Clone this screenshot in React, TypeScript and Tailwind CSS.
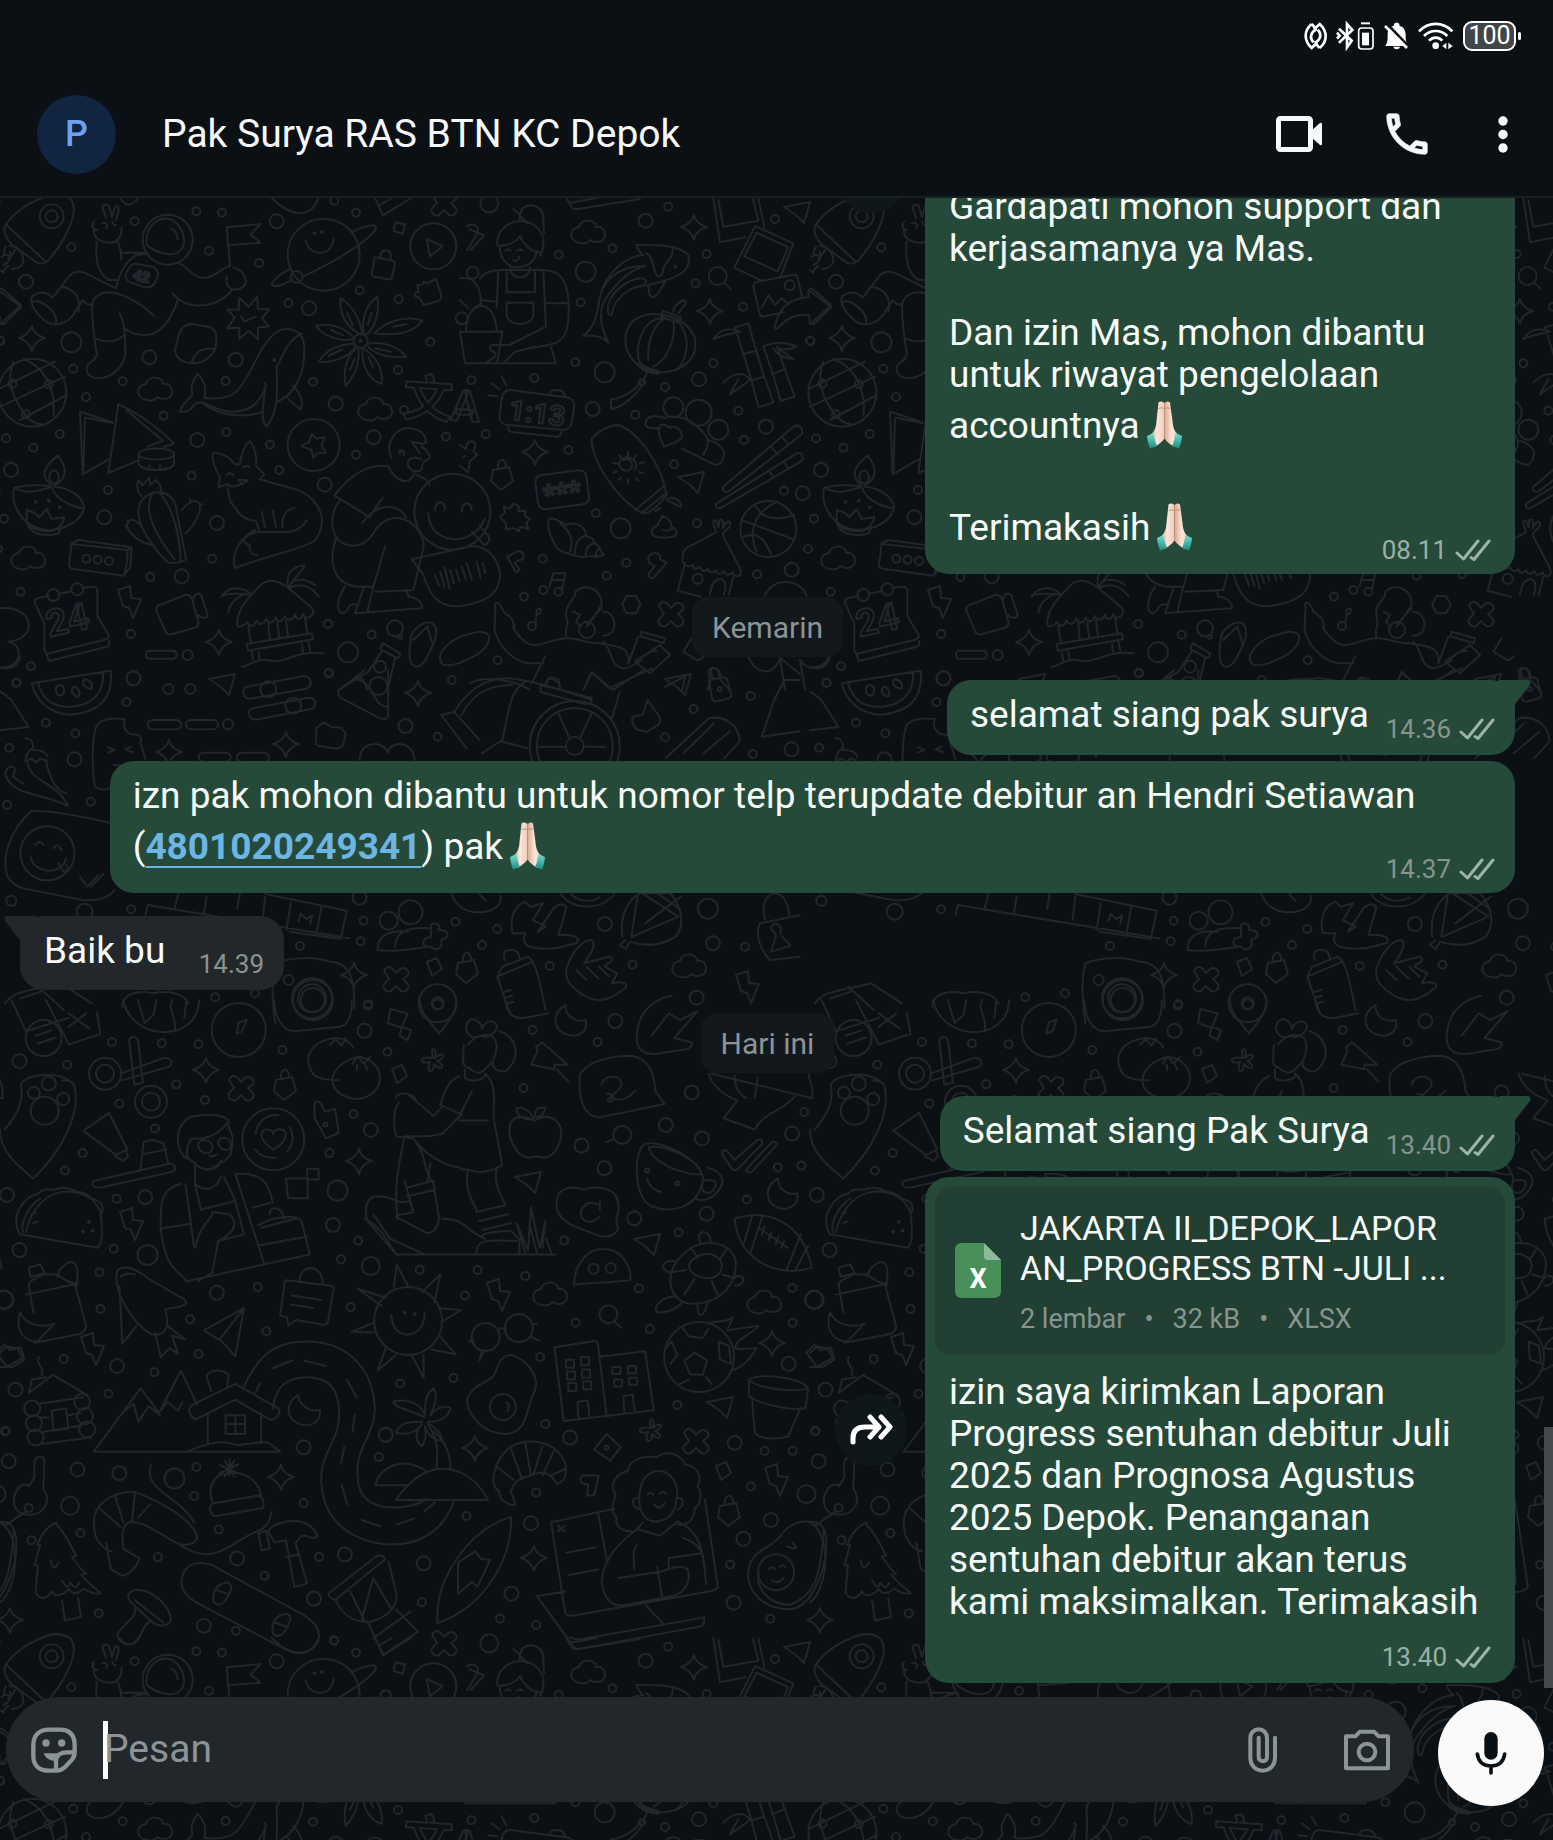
import { useState } from 'react';
import type { ReactNode } from 'react';

type Sheet = {
    x: number; y: number; sx: number; sy: number;
    rings: number[][];
    paths: string[];
    texts?: Array<{ x: number; y: number; size: number; rotate: number; value: string }>;
};

// wallpaper doodles, one tile is 810 x 1440 and repeats over the whole page
const TILE_W = 810;
const TILE_H = 1440;

const sheets: Sheet[] = [
    {
        x: 0, y: 190, sx: 1 / 3, sy: 1 / 3,
        rings: [
            [155, 79, 12], [155, 79, 6], [214, 172, 4], [404, 94, 4], [589, 64, 4], [666, 68, 4], [627, 182, 4], [777, 219, 4], [830, 94, 7], [1003, 32, 4], [1068, 68, 4],
            [78, 275, 7], [214, 457, 10], [220, 536, 4], [258, 621, 4], [368, 574, 4], [448, 502, 7], [491, 677, 4], [179, 732, 4], [18, 745, 4], [100, 773, 4], [33, 840, 7],
            [865, 339, 4], [927, 355, 7], [707, 509, 7], [677, 573, 4], [939, 575, 4], [1007, 641, 7], [1079, 301, 4], [1196, 328, 4], [1291, 455, 4], [1194, 540, 4], [1212, 660, 4],
            [679, 726, 4], [592, 750, 7], [810, 764, 4], [838, 840, 4], [575, 857, 4], [324, 900, 4], [313, 982, 7], [12, 986, 4], [651, 999, 7], [974, 884, 7], [1068, 794, 4], [1121, 742, 7], [1338, 740, 4],
            [637, 1106, 4], [451, 1161, 4], [545, 1159, 7], [62, 1205, 4], [393, 1332, 4], [563, 1395, 5], [984, 1302, 4], [1044, 1387, 10], [1115, 1334, 4], [1185, 1315, 8], [93, 1429, 4], [50, 1478, 4], [400, 1465, 7], [986, 1448, 4], [0, 452, 4],
            [503, 149, 25], [971, 194, 36], [890, 261, 6], [944, 130, 1], [965, 126, 1], [1300, 169, 23], [1082, 453, 7], [1082, 453, 1], [97, 608, 34], [37, 581, 4], [146, 583, 4], [78, 673, 4], [823, 510, 1],
            [107, 936, 1], [146, 932, 1], [179, 952, 1], [941, 765, 26], [1357, 965, 38], [259, 1106, 4], [293, 1109, 4], [327, 1113, 4], [160, 1215, 6], [232, 1198, 6], [1140, 1430, 6], [1200, 1340, 2],
        ],
        paths: [
            'M125 24C70 45 30 80 14 110c-4 20 5 35 20 52l75 55c15 8 25 4 38-8 30-35 65-90 74-140 2-20-2-35-12-45C180 5 150 12 125 24M22 107l112 105',
            'M18 170q-10 15-5 25M28 168c25 0 40 20 42 40s-20 30-35 28M5 200q15-10 25 0M10 225c15-5 25-20 20-40M0 240l10 8q0-12 15-20M45 180q-10 20-20 25',
            'M0 295l8 3 52 45c4 4 4 8 0 12L15 400q-6 4-15 0',
            'M283 95c-10 10-5 25 8 25M306 100c12-5 20 5 12 15M318 85l-10-32c0-12 18-12 20 0l8 28 8-28c5-10 14-4 12 8l-8 30M338 95q2 14 10 10M283 120c-5 20 15 38 45 38 25 0 40-20 36-45M290 155c-5 60 5 95 35 115h30M350 150q14 25 14 58M365 188h75M348 295c10-50 35-90 65-100l30-5M348 295l-90-45c-20-8-40-5-50 8l-50 65c-20-20-40-20-60-5-15 20 15 60 45 80 20 10 50 5 70-15l35-52 10 10 20 5M100 335c20-10 75 30 68 65M185 290c35 5 60 30 50 75',
            'M440 165c-5-45 20-75 55-80 35 0 60 40 57 75-5 25-25 35-50 32-20-2-50-15-62-27M513 115q20 10 20 32',
            'M415 222l40 8c15 5 22 15 17 32l-8 18c-8 12-20 14-35 10l-35-12c-15-6-20-15-16-28l10-18c5-10 14-13 27-10z',
            'M535 220c25 5 40 40 70 44 35 3 60-30 85-38M700 232c20 5 35 20 37 38s-15 30-35 28-25-20-22-40M518 310c40 50 130 50 180-12M535 325c-20 60-50 110-100 110-25 0-45-8-60-18M358 368c18 35 18 70 18 130-10 35-40 65-80 67-45-3-45-38-15-55l10-15c-10-60-15-120-15-150 5-30 30-38 55-38 45 5 95 35 132 72M285 445c25 12 65 15 90-12',
            'M690 230l-10-118 102-10-30 32 30 24-98 8',
            'M1058 125c30-15 65-25 70-15 0 25-100 95-220 150M872 235c-30 15-60 40-56 52 20 5 40-8 62-18M917 150c5 50 80 55 84-5',
            'M815 24c60 60 120 60 140 0M360 24q25 40 55 0M1125 24l24 52 84-52M1135 48l40-24',
            'M1187 97l28 6-6 28-28-8zM1280 147l48 22-38 30z',
            'M1127 202l50 10c6 2 8 6 7 12l-8 38c-2 6-6 7-12 6l-40-8c-8-2-10-6-8-12l6-38q1-8 5-8zM1142 205v-10c2-18 30-18 30 0v15',
            'M1270 345l-10-20-16-8q0-14 12-10l-4-22 16-2q2-14 12-2l28-14 16 50c2 10-6 18-16 18z',
            'M718 323l28 27 26-30 2 38 34 0-22 26 20 25-32 4 0 34-28-24-28 24 0-34-36 2 22-32-22-24 34 0zM722 378l12 16 34-14',
            'M575 402l50 8c20 5 26 20 24 38l-3 30c-20 35-45 42-70 42-30-2-55-20-50-45l12-45c6-18 18-27 37-28zM575 518c10-30 25-45 68-42',
            'M540 665c5-25 35-45 38-52-10-30 5-45 15-62 10 15 30 30 20 72 20 5 50 2 75-5 70-30 90-200 175-202 40 5 50 30 50 65 0 70-25 130-82 155M540 665c25 2 30-5 40-18 25-30 60 20 120 18 40 0 80-20 98-80l-5-6M605 638c60 45 130 45 182 28M905 430c-40 20-50 55-75 100 0 60 10 130-30 180-20-20-10-60-5-110M878 588c25 20 32 50 25 70-15-10-30-20-45-40',
            'M1078 432c-50-30-60-70-56-108 30 20 60 60 64 106M1092 432c-10-50 10-90 40-112 8 50-10 100-34 114M1062 447c-40 10-95-10-114-40 50-10 90 10 114 36M1068 468c-20 35-70 50-112 48 20-35 60-55 108-55M1075 474c5 50-15 90-38 114-10-50 5-90 30-112M1090 474c40 30 60 60 55 108-35-10-60-50-58-104M1102 462c50-10 95 10 116 38-45 5-90-5-114-30M1125 428c30-30 90-55 142-36-30 40-90 45-142 38M1042 370l16 36M1115 368l-12 36M992 420l38 16M985 498l42-20M1050 540l14-34M1105 500l14 32M1180 410l40-8M1125 475l48 10',
            'M40 515c-20 50-10 100 35 158 12 15 20 25 50 30M70 507c60 20 100 90 90 170M0 650l195-90M0 595l165-80M60 690l140-75',
            'M240 665c35 10 60 20 98 32M240 665l8 188 78-45M255 683l-5 160M258 683l80 16M355 643l-30 206 90-38M355 643c50 20 120 70 167 118l-30 10M380 660c50 45 70 60 110 92l-48 18M416 792c0-22 106-22 106 0s-106 22-106 0zM416 792v30c10 24 95 24 106 0v-30M448 838v-12M480 838v-12',
            'M42 893c60 30 90-5 115 0 10 40 70 60 95 62-10 40-60 65-110 65C80 1015 30 960 42 893zM42 893c40-10 80-8 108-5M165 890c50 5 80 30 88 62M155 885c-35-25-25-55 18-88 25 30 35 65-10 90M148 865c0-30 25-30 28-5s-25 25-28 5M80 1000v-40q25 5 38 22l22-25 15 30 38-5c-5 25-25 40-45 42-30 0-60-10-68-24zM85 1008c10 20 25 25 60 27 25 0 35-5 35-15',
            'M500 1115c-30-30-85-100-85-150 0-70 110-85 115 0l28 140c0 8-40 20-58 10zM458 908c-35 60 20 140 65 200M480 908c40 50 60 130 62 205M425 918c-15-10-15-35-10-48l12 16 20-22 4 20 16-14c15 15 22 30 12 40M545 960c30-40 70-35 50 15-10 25-25 45-38 55M455 1065c-50-10-80-50-72-65 5-20 30-10 45 15M376 1008l8 4M382 990l4 8M570 935v-8M600 945l8-2',
            'M655 892l5-30C640 830 635 800 640 788c30 0 50 15 65 35h15c0-25 15-60 30-70 15 20 20 50 18 75l25 25-14 14c40 15 100 25 130 40 65 40 70 100 35 145-20 20-140 45-240 82-10-50 20-100 70-108h80c20 0 50-5 66-36M655 892l28-10c10 15 35 5 60-10M683 895c5 30 10 50 25 60 10 25 35 35 60 38l8 25M785 965l10 45M818 960l10 50M848 1012c-5-30 10-55 35-58M765 1020c-40 20-40 40-15 45-5 20 5 30 20 30M680 855q10-10 20 0M730 832q10-10 18 0M715 870h22l-10 15z',
            'M935 732l14 14 24-4-8 24 12 22-22 0-15 15-6-24-30-10 24-14z',
            'M1165 830c25 45 60 60 78 20M1175 805c-25-50 20-100 60-90 30 5 50 30 40 45-15 5-30-5-40-5l25 35M1200 790c-10-15 20-10 10 5M1265 770c20 15 30 30 20 38-25 5-15 30-25 35-30 5-40-15-35-30s30-10 40-5M1165 828c-60-5-110 20-162 88l105 65 40-58M1020 930c-35 45-30 110 10 130 30 15 70 5 90-30s45-50 80-45c50 10 75 60 70 90l-30 125-115 5M1088 998c40-60 110-60 130-15M1010 1040c-25 70-15 140 60 150h50l35-120M1120 1190l-18 75M1090 1195l-25 75 200-15c5-15-15-35-40-35l-5-20M1035 1190c-20 30-30 70-10 80 30-5 10-35 50-25M1250 855q30 10 40 30',
            'M1285 970c0 90 130 110 170 15M1305 960c2-32 30-32 30 0M1385 965c2-32 30-32 30-5M1415 1025l38 40c15-5 20-25 5-35l-20-25',
            'M1235 1108l35 45c20 70 50 100 110 95 100-15 120-50 120-95-5-50-40-85-85-85l-180 40M1305 1155l12 32M1320 1145l14 45M1333 1130l16 66M1350 1140l12 40M1368 1138l10 34M1385 1130l14 40M1400 1120l16 50M1430 1115l12 50M1448 1120l8 30',
            'M215 1060l20-10 160 22-4 60-20 25-150-20c-12-2-14-6-14-12zM215 1062l168 18c0 25-2 50-12 77M383 1080l12-8',
            'M145 1218l-30 6c-8 2-12 8-10 16l28 60v80c2 8 6 12 14 10l165-40c10-3 16-8 14-16l-34-56v-75c0-8-6-14-16-13l-22 3M175 1212l40-8M140 1392l5 18c3 3 8 3 15 0l155-38c12-3 14-8 13-20',
            'M0 1255c100-10 120 90 25 100 50 10 40 80-25 78',
            'M485 1243l70-28c10-2 16 2 20 10l20 70c2 10-2 15-10 18l-70 20c-10 2-16-2-20-10l-26-62c-2-10 4-15 16-18zM580 1232c-2-20 20-30 25-12l18 55c-2 10-20 12-28 0',
            'M712 1305c-5-40 30-80 70-120 30-25 60-10 90 15l65 55c5 15 0 25-15 28-5 0-10-5-12-12-5 20-22 20-25 2-5 20-25 20-30 5-8 20-22 20-28 4-5 18-20 22-28 4-8 18-22 22-30 5-5 20-20 22-28 5-8 12-26 18-29 9zM745 1310l8 50M915 1285l8 50M740 1362l195-32 4 18-195 34zM755 1385l5 25M775 1385l4 22M905 1355l4 30M925 1352l6 32M805 1300l4 50 55-10-6-48M832 1298l6 48M725 1430c20 0 40-25 75-20 60 15 80-30 170-20M755 1215c-30-30-70-25-90 5M755 1215c-30-10-65 20-70 52M755 1215c-30-5-55-5-88 0M865 1195c-10-40 10-70 50-68-10 20-30 30-50 68 10-30 45-35 80-10M868 1195c20-15 60-15 88 25',
            'M450 1382h68c16 0 16 24 0 24h-68c-16 0-16-24 0-24z',
            'M1232 1350c0-30 40-60 65-50 20 15 10 50-5 80-15 30-25 50-45 50-20-5-22-30-15-80zM1240 1350q30-30 42-40l15 50M1380 1340c-40 20-80 60-50 85 30 5 60-10 90-25 40-20 60-60 40-70-20-10-40 0-80 10z',
            'M1150 1360l50 30q0 14-10 14l-48-26q0-12 8-18zM1145 1385l-40 60-90 55M1185 1405l-22 95M1065 1460q30 0 35 40',
        ],
        texts: [
            { x: 396, y: 268, size: 44, rotate: 14, value: '42' },
            { x: 148, y: 1342, size: 112, rotate: -13, value: '24' },
            { x: 1205, y: 675, size: 150, rotate: 4, value: '文' },
            { x: 1350, y: 690, size: 130, rotate: 4, value: 'A' },
        ],
    },
    {
        x: 460, y: 190, sx: 1 / 3, sy: 1 / 3,
        rings: [
            [88, 40, 9], [296, 194, 4], [557, 92, 7], [625, 50, 4], [457, 175, 4], [377, 245, 10], [362, 337, 4], [740, 192, 4], [707, 280, 4], [945, 87, 4], [849, 350, 4], [760, 520, 4], [717, 568, 7], [346, 517, 4], [434, 547, 10], [223, 564, 4], [34, 571, 4], [398, 657, 7], [615, 591, 4], [526, 674, 4], [835, 662, 4], [918, 710, 7], [852, 750, 4], [642, 823, 4], [972, 902, 4], [1028, 910, 7], [1051, 453, 4],
            [77, 733, 4], [325, 780, 4], [407, 970, 4], [482, 1015, 10], [711, 1000, 4], [248, 1106, 4], [499, 1118, 4], [440, 1157, 4], [192, 1220, 4], [891, 1153, 4], [995, 1139, 7], [1044, 1077, 4], [113, 1411, 4],
            [38, 248, 6], [773, 258, 9], [989, 286, 5], [546, 577, 3], [640, 652, 10], [716, 668, 13], [775, 719, 10], [713, 1166, 5], [925, 1017, 28], [381, 1320, 8], [250, 1200, 4], [295, 1205, 4], [216, 1308, 4], [646, 230, 1], [5, 385, 6],
        ],
        paths: [
            'M112 165c-5-40 30-70 68-72 40 0 75 30 70 75-2 15-5 25-12 30M112 168c30 0 55-10 68-30 10 25 35 50 60 48M120 170c-2 40 30 65 55 62 30-2 50-15 55-50M150 232c0 40 60 40 60 0M160 55l42 45M180 90c-10-60 80-60 70 10l2 30M110 240q-35 5-50 25M118 240h130c50 0 72 25 78 95 0 60 5 120-60 130l-60 10M115 242l-5 110M140 245v62h85v-62M140 338h80v40c-10 32-70 32-80 0zM250 245l8 165-110 55h-50c-15 5-8 20 8 22 5 15-15 20-25 30M255 340h70M15 520h272l-14-50M135 515l30-30 60-15M0 425h127l-15 90M18 425c0-100 90-105 92 0M60 330l50 5M0 265c35-5 60 10 64 75l-30 20M0 330l25 25M15 520L0 425M135 182q10-8 18 0M172 182q8-8 16 0M160 210q12 10 18-10',
            'M320 25l15 28c5 6 10 4 20 4l185-30M330 38l80-14',
            'M20 110c20-15 40 0 32 20l-30 50M30 118l42 18-40 44',
            'M530 165c30 0 130-5 155 30 10 50-30 70-120 90-30 0-100 20-110 90-15 0-15-20-5-45 10-25 50-60 90-65 20 0 20 10 15 15M530 165q5 20 20 30c-60 5-115 60-130 125-10 60-15 90-50 118 40-5 60 5 75 20-20-40-40-100 5-150 30-40 65-70 105-80-60 0-100 20-125 65M560 190c20 10 15 40 30 65 10 10 20 0 20-20 15-30 30-30 28-65M565 285c0 50 20 50 50-10',
            'M530 385c60-30 150-5 175 60 10 60-40 110-120 100-60-5-95-60-88-110 5-20 15-40 33-50zM610 385c-60 0-90 80-70 140M640 390c10 60-20 120-60 140M650 390c40 40 40 110 0 150M565 510c-5-60 20-110 50-125M608 362l55 20q0 14-10 15l-50-18zM640 365c0-20 20-30 30-35 15 5 5 15-15 40M540 518c10 15 30 20 55 25q5 8 2 8-40 0-60-22zM560 550l-12 25M545 585c-10 25-60 70-92 72v-30c30 0 65-20 88-50',
            'M760 25l20 132 75-15M775 30l15 80 105-18-16-66M895 25l18 88M885 108l115 52-40 105M885 108l-62 125 80 38M890 128l95 44-32 72-100-45zM880 290c0-8 4-12 10-14l110-22c8 0 12 4 13 10l14 60M880 290l20 85c3 5 8 5 12 4l60-12M905 355l20-40 20 30 20-20 20 18',
            'M945 410c10-60 50-85 100-88v-22l65 48-60 55-2-28c-40-5-70 10-95 40q-6 4-8-5zM793 278l20 20',
            'M865 400l-40 12 25 80 25 80 20 80 45-15-30-85-20-65-25-87M850 492l40-10M875 572l38-12M760 447c20-30 50-35 80-22-30 5-50 10-80 22M790 578c30-30 60-35 80-10-20 20-40 30-60 45l25-45M910 470l30 85 22 78 42-14-30-80-22-70M935 552l40-14M910 470c40-20 80-10 100 0-20 10-40 10-60 2l50 35c-30-2-50-15-60-32',
            'M150 600l170 22c16 3 24 14 22 28l-6 45c-3 16-14 26-30 24l-165-14c-16-2-24-14-22-30l6-50c3-16 12-25 25-25zM145 710q0 14 10 16l135 14q12 0 14-14M270 610c0-15 45-15 45 10M125 560l14 26M95 580l24 18M86 616l26 3',
            'M395 745c20-20 50-40 80-40 60 20 130 120 145 210-15 20-40 50-65 55C500 960 390 820 395 745zM525 960l85-70M545 968l75-60M620 930c15-15 45 0 43 20-20-5-30-15-43-20M600 955l-15 8M490 810c20-10 35 15 20 28-15 12-40-5-30-25 15-25 60-5 45 25M504 785v12M504 868v12M457 818l14 3M540 820l12-3M477 795l8 8M530 795l-8 10M460 848l10-4M550 850l-12-4M475 870l8-8M535 872l-8-8',
            'M600 715c-30 0-50 0-42-20 5-20 30-20 60-10M620 680c50-5 90 20 120 60 10 30-5 40-10 55M742 750c40 10 55 30 48 50-5 25-20 28-35 20l-90-45M612 770c-10-20-25-55-10-65 15-5 20 5 28 8 15-8 35 5 36 25-5 20-35 22-54 32z',
            'M790 890l210-180c18-10 35 10 22 26L805 905c-12 4-20-6-15-15zM965 740l22 24M932 770l22 24M770 940l240-150c18-5 24 15 12 25L780 955c-10 2-16-8-10-15zM972 815l14 24M925 840l16 22',
            'M245 855l110-14c15 0 22 6 24 18l8 62c0 14-6 20-18 22l-108 14c-14 2-24-5-27-18l-8-60c0-14 6-22 19-24z',
            'M0 765l18 12c0-22 14-28 26-20 5 10 0 20-4 28l12 10-22 18-6 34-24-20M10 800l6-2',
            'M120 980l15-12-4-20 18 8 12-16 16 10-2 14 20-2 0 16 16 8-12 12 6 18-24-6-4 14-16-10-24 4 2-16z',
            'M265 995c5-20 25-5 55 10 20-10 60 0 58 35 15 0 25 5 25 20 20 5 10 15 28 35-30 10-40 0-52 5-20 5-35-5-50-8-20-5-30-10-35-15C275 1050 262 1020 265 995zM300 1000c40 30 40 60 28 90M380 1035c-30 10-35 30-35 58M405 1058c-20 5-30 20-28 42M418 1075q-12 10-10 26',
            'M578 1035c-8-15 5-28 15-28-2-15 15-15 14-30 20 10 30 20 25 32 15 5 20 15 15 28-15 8-55 8-69-2zM610 1020q20 6 30-8',
            'M668 1110c0-20 0-25 15-38l85-45c-5-20-15-40 0-35l8 20 2-22c10-5 14 5 10 25 8-20 20-25 22-15 5 15-20 20-22 35l52 100c5 10 0 25-8 24-8 0-12-5-14-12-10 12-22 8-26-4-8 12-20 10-24-2-10 10-22 8-24-4-10 10-20 6-24-6-12 10-20 4-22-6-10 8-28 4-30-15zM675 1120l-22 82 70 18M820 1160l-14 55M750 1215c5-60 50-60 46-20l-4 20',
            'M850 992l148 55M885 945c20 40 60 50 118 30M950 935c-60 30-90 80-60 150M850 1040c50-20 70 20 85 58',
            'M142 1100l30-16c18-2 24 14 14 24l-22 10 14 20q-4 10-12 6zM566 1100c15-20 40-10 34 8l20 10-40 46q-16 2-14-12l18-24c-16-4-22-16-18-28z',
            'M268 1190l12-40 36 0-10 48M275 1170h36M226 1305l4-46 12-4q2 16-12 20',
            'M105 1325c15 50 60 90 100 95h45M105 1325c-5-20 5-70 0-80 5-15 15-5 25 20l20 15c15 15 10 30 12 35M160 1315c20 30 40 50 65 50s60-20 95-20 60 15 100 15c50 10 90 5 85 60M255 1400l-40 80M320 1345c-10-30 10-40 0-60-10-40 25-60 25-70-5-30 80-40 80 30l-40 60M340 1265l20 10-12 20 14 16M425 1255c-20 20-40 40-45 55M430 1265c40 0 50 70 0 72M430 1355c30 30 20 75 60 80 15 0 40-15 55-25M505 1420l30-80M545 1325l70 20-4 14-70-20zM525 1415l75-50 30 30-60 55zM550 1400q20-20 40-16',
            'M500 1218h28l14 26-14 26h-28l-14-26z',
            'M915 1217c20-55 105-55 125 0M865 1398c20 60 80 60 95 5l60 50M1020 1410c20 30 80 40 90-12M960 1405l15 95M1020 1410l15 90M695 1345l-25 40 40 25q10 2 20-10',
            'M370 1500l26-55 50 50 130-60M30 1480c60-30 150 0 180 20M256 1490l10-26q20-4 30 6l4 30M615 1490l60-30-8 40M745 1445c5-15 25-15 30 0l6 24 28 31M745 1445l6 24-8 30',
        ],
        texts: [
            { x: 144, y: 688, size: 84, rotate: 7, value: '1:13' },
            { x: 254, y: 944, size: 84, rotate: -8, value: '***' },
        ],
    },
    {
        x: 0, y: 670, sx: 0.51, sy: 1 / 3,
        rings: [
            [32, 38, 4], [262, 25, 7], [330, 57, 5], [373, 57, 5], [248, 96, 4], [90, 158, 4], [148, 190, 4], [18, 233, 4], [146, 268, 7], [447, 163, 5], [178, 395, 4], [14, 405, 4], [645, 10, 4], [795, 168, 7], [858, 200, 4], [886, 30, 4],
            [22, 692, 5], [257, 718, 4], [705, 683, 7], [713, 752, 4], [707, 814, 4], [588, 828, 4], [893, 755, 4], [975, 777, 4], [1186, 762, 7], [945, 825, 4], [1388, 716, 10], [1398, 820, 7], [1461, 830, 4], [1078, 888, 4], [1240, 884, 4], [1366, 983, 7], [566, 930, 5], [422, 982, 4], [722, 1003, 4], [500, 970, 4], [1472, 78, 4], [1360, 117, 4], [1304, 202, 4], [1476, 252, 4], [1552, 238, 7], [166, 725, 8],
            [1127, 228, 45], [1127, 228, 38], [1127, 228, 9], [93, 550, 27], [612, 985, 20], [612, 985, 14], [762, 752, 9], [805, 727, 12], [858, 1000, 19], [858, 1000, 6], [526, 58, 8], [575, 107, 8], [742, 48, 9], [1411, 57, 2],
        ],
        paths: [
            'M62 40l155-38c5 80-20 125-80 132C95 130 70 90 62 40zM75 42c10 50 30 70 65 68 40-5 65-40 62-104M115 45c15 0 12 25 5 32-12-2-14-25-5-32zM145 50c10 5 14 20 8 30-12-5-16-20-8-30zM165 28c12 0 18 15 14 28-12 0-20-15-14-28z',
            'M485 50l110-32c15 0 20 30 5 38l-110 30c-14 0-18-28-5-36zM495 115l110-32c15 0 18 25 5 34l-108 32c-16 0-18-28-7-34z',
            'M0 65c10 5 15 20 20 20l36 86-56 10',
            'M185 340c-5-60-5-140 5-175 10-20 30-22 55-18-5 20 0 35 10 45 20 0 25 10 20 25l10 50M185 340c2 25 30 25 38 0M212 232l12 8-12 8M258 230l-12 8 14 8M222 285h14l-4 20',
            'M300 150h45c14 0 14 28 0 28h-45c-14 0-14-28 0-28zM375 150h42c14 0 14 28 0 28h-42c-14 0-14-28 0-28zM400 248h42c14 0 14 28 0 28h-42c-14 0-14-28 0-28zM475 248h42c14 0 14 28 0 28h-42c-14 0-14-28 0-28z',
            'M620 175l15-18 15 14 20 2 8 20-6 34c-5 8-10 10-18 8l-30-8c-6-4-6-10-4-18zM705 270c0-60 50-60 55-20 5-40 50-40 53 20',
            'M715 0l-50 60c-5 10 0 20 5 25l75 60c10 5 16 0 16-10V0M700 30c30 0 30 80 60 80',
            'M1055 230h52M1147 230h40M1095 130l20 70M1160 130l-22 72M890 130c20-60 60-110 110-105 60 10 130 50 160 65M1060 45l100 38c0 20-5 20-15 18l-85-35zM865 135l50 100M890 125l50 85M865 135l25-10M905 135c20-60 50-90 100-90M1030 35c-30 30-30 70-45 175l-40 40M985 215l50 20M1150 40l10-32 42 52 60-60M1215 65l-15 80M1070 40q8-30 28 5',
            'M1240 140l20-6 10-44 20 44c8 15 5 30-10 40l-12 12-20-8-8-20z',
            'M1305 265l85-120c30-10 60 20 60 70l-30 50M1340 250l60-90M1380 250l50-65',
            'M1390 30l28-8q6 0 8 8l8 44q0 10-8 12l-18 8q-10 2-12-8zM1398 26c-10-30 0-40 12-24l4 20M1568 30h-30l-20 60-24 110 74-16',
            'M50 205c15 0 15 20 15 30-10 5-15 25-15 40M65 240c15 0 25 5 28 20M50 275l12-10 8 12 10-12 12 10M55 280c0 50 60 60 78 128C90 370 20 380 10 310c5-20 15-30 20-10l-5 20 20 20M90 270c5 40 15 90 40 100',
            'M60 425c25-10 120 20 160 35M60 425C20 480 5 560 12 600c0 30 20 55 50 60l100 30c30 5 55-10 62-30M60 560c5 50 60 60 70 5M70 525q8-20 15 0M105 535q8-20 15 5M115 580l10 25c8-2 10-10 5-20M157 620l14 30 22-35M178 650l25-38',
            'M290 705l395 100M285 735l5-30M520 672l160 50-12 85-100-22M350 672l-8 45M405 680l-5 50M470 672l-5 45M520 680l-5 70M570 700l-8 80M630 710l-10 85M585 755l5-24 10 16 12-10-4 24',
            'M540 880c30-20 80-20 105-5 50 0 50 80 50 140M540 880c-10 60-5 130 0 180M10 1000c15-40 60-40 110-60l60 60M75 950l50 70M40 985l40-20M240 1010c0-40 30-50 60-40 30-10 60 0 70 30',
            'M885 672c10 40 30 55 55 55s45-20 42-50M1100 672c20 50 80 50 105 0M1120 672c15 25 40 25 55 10M940 672l12 20',
            'M740 840c0-50 30-60 60-55M740 840c20 5 60 0 100-10M775 830c0-50 30-60 70-55M845 765c10-10 20 0 15 15 20 0 25 20 5 30 5 25-10 35-20 20-20 0-20-25 0-30z',
            'M1005 790c-5-40 0-80 25-95l10 15 25-10-20 50 25 20-15 15 30-70c15-20 25-10 25 0l-15 80c30-5 45 10 35 25l-40 15c-50 5-70-5-60-45z',
            'M1220 800c-5-60 10-110 35-130h60c20 40 30 90 10 130-30 30-60 30-90 15l-8 22-12-12 12-15M1250 680l-12 120M1260 670l70 70M1290 670l45 50M1335 680l-70 80M1240 800l90-60',
            'M1490 760l78-24M1490 760c-10 30 0 80 20 110l58-10M1500 750c-10-60 10-90 30-75 10 10 15 30 18 60M1530 790c5-30-15-40-18-15l10 20-10 50 38-18-18-30',
            'M985 890l50-30c20 20 25 100 35 160M975 920l70-45M985 890l-10 30 25 110M990 870c-5-20 0-35 15-30s10 15 15 25M990 965l12-5M992 982l12-5M995 1000l12-5',
            'M1110 900c10-50 30-90 50-90 10 10 0 40-15 70l50-20c15 10-5 20-10 30l25 20-10 30c30-10 35 10 20 20-30 40-60 40-90 0-15-20-20-30-20-60zM1130 900l20 30M1150 890l24 36M1175 890l20 30',
        ],
    },
    {
        x: 0, y: 1000, sx: 0.574, sy: 0.4464,
        rings: [
            [34, 137, 7], [117, 145, 4], [195, 94, 4], [282, 97, 4], [346, 99, 4], [208, 232, 4], [307, 189, 4], [357, 224, 4], [270, 288, 4], [144, 343, 4], [113, 382, 4], [12, 437, 7], [203, 445, 4], [253, 442, 7], [34, 560, 7], [198, 557, 4], [257, 571, 10], [492, 112, 4], [641, 12, 4], [635, 69, 7], [675, 116, 4], [616, 256, 4], [646, 291, 7], [574, 343, 4], [588, 427, 10], [580, 504, 7], [624, 539, 4], [594, 581, 4],
            [173, 610, 4], [8, 672, 9], [175, 692, 4], [449, 643, 4], [378, 656, 7], [331, 715, 4], [464, 742, 4], [611, 688, 4], [646, 596, 9], [731, 604, 4], [832, 605, 4], [810, 662, 4], [915, 618, 4], [983, 539, 4], [1105, 489, 7], [1182, 521, 4], [1231, 479, 7], [1301, 447, 4], [1013, 326, 7], [1053, 377, 7], [1160, 280, 7], [1223, 310, 7], [912, 197, 4], [928, 67, 4], [1041, 94, 4], [1072, 47, 7], [1205, 207, 7], [1380, 299, 7], [1355, 375, 4], [1396, 371, 4], [1401, 251, 4],
            [346, 793, 4], [204, 820, 7], [111, 804, 4], [269, 834, 4], [189, 882, 4], [27, 873, 7], [9, 966, 4], [15, 1033, 7], [135, 1052, 7], [208, 1060, 7], [304, 1072, 10], [342, 1046, 4], [338, 1111, 4], [122, 1133, 9], [697, 859, 4], [790, 847, 4], [941, 800, 4], [1003, 723, 4], [1132, 737, 4], [1113, 646, 4], [529, 1002, 7], [672, 974, 7], [660, 1024, 4], [529, 1127, 4], [381, 1186, 4], [813, 1156, 4], [925, 1172, 7], [934, 1103, 4], [950, 950, 4], [993, 980, 7], [1180, 907, 4], [1280, 992, 7], [1332, 1010, 4], [1381, 1010, 4], [1421, 965, 4], [1374, 815, 7], [1381, 723, 4], [1380, 645, 4], [1418, 671, 9], [1308, 1090, 4], [1405, 1107, 9],
            [140, 1194, 4], [55, 1210, 4], [275, 1248, 4], [413, 1251, 7], [461, 1290, 4], [556, 1248, 4], [601, 1242, 7], [547, 1341, 7], [738, 1262, 7], [735, 1349, 4], [891, 1330, 7], [871, 1386, 4], [934, 1400, 4], [172, 1374, 4], [355, 1402, 7], [411, 1413, 4], [1343, 1165, 7], [1295, 1207, 7], [1272, 1265, 4], [1278, 1350, 7], [1342, 1386, 4], [582, 1434, 4],
            [711, 719, 34], [705, 700, 1], [722, 704, 1], [876, 912, 13], [1218, 800, 35], [1034, 602, 5], [1064, 601, 5], [1127, 382, 2], [1180, 411, 2], [476, 312, 31], [183, 165, 16], [183, 165, 9], [263, 228, 16], [263, 228, 9], [59, 208, 6], [85, 187, 7], [110, 222, 6], [78, 248, 14], [846, 755, 14], [904, 735, 14], [1352, 1282, 18], [50, 1138, 4],
            [56, 915, 8], [59, 948, 8], [62, 980, 8], [143, 900, 8], [148, 932, 8], [152, 962, 8], [416, 67, 27], [545, 0, 20], [545, 0, 12], [763, 10, 5], [76, 85, 18], [1084, 302, 9], [1060, 704, 9], [155, 497, 1], [145, 519, 1], [161, 517, 1], [567, 279, 2], [1057, 1003, 2],
        ],
        paths: [
            'M425 865c30-80 60-100 110-100 70 0 115 60 118 150 0 60-35 90-30 150 0 40 15 70 60 72 20 0 45-5 60-20M475 915c5-50 25-70 60-70 40 0 60 30 55 100-5 50-35 80-30 140 5 90 60 130 120 135 60 0 95-40 110-95M475 825l35-18M530 808l38 12M445 880l8-22M604 850l18 42M618 930l-4 38M600 1000l-6 38M595 1085l10 45M630 1165l32 14M692 1175l30-14M740 1145l18-20',
            'M362 925v70M455 925v65M340 940c-10-10-15-25-5-33l75-47 75 55c5 12-5 25-15 25l-60-45zM368 875l-8-30c0-20 38-20 38 0l-2 20M393 930h34v42h-34zM410 930v42M393 950h34M163 1012h325l-20-20c-20-5-40 5-55 5-30-15-60 0-88 15M163 1012l82-142 32 55 38-95 28 75M218 920l15-15 8 40 18-35 20 20M280 920l12-20 18 20 8-20',
            'M520 885c-25 15-25 65 15 68 15-3 25-15 22-35-15 5-35-5-37-33zM985 12c-25 15-25 65 15 68 15-3 25-15 20-35-15 5-35-5-35-33zM1355 400c-25 15-25 65 12 68 15-3 25-15 22-35-15 5-32-5-34-33z',
            'M682 705c0 60 58 60 58-5M686 645l5-52 20 48M735 655l32-40-10 62M765 690l38 5-34 26M768 755l25 38-42-10M738 795v52l-20-50M690 795l-32 35 14-50M655 745l-42-2 38-20M665 685l-42-38 50 20',
            'M760 1050c5-50 0-70-15-100M785 1050c0-40-15-70-30-85M740 935c-30-20-50-20-55-35 30-10 50 10 55 30 0-40 5-50 15-60 10 20 0 40-5 60 15-25 35-20 35-15-5 20-20 30-40 30M735 945c-30 0-40 5-45 25 20 5 35 0 45-20-15 20-10 40 0 50 8-15 8-30 5-45 5 20 20 35 30 30 0-15-15-30-25-38M690 1120h160c-20-50-50-70-80-70s-60 30-80 70zM742 1055c-40-35-80-10-88 32h58',
            'M890 795c30 10 50 50 42 80-15 30-10 95-50 97-45 0-70-50-68-80 15-40 40-30 50-60 5-25 15-37 26-37zM882 900q8 8 2 20',
            'M982 943l-16-165 70-14c5 0 6 5 6 10l15 160M982 943l157-24-15-132-80 12M986 806h14v18h-14zM1012 800h14v18h-14zM988 832h14v18h-14zM1014 828h14v18h-14zM990 858h14v18h-14zM1016 854h14v18h-14zM1067 822h14v16h-14zM1094 820h14v16h-14zM1070 850h14v16h-14zM1096 846h14v16h-14zM1008 938l-2-38 18-3 3 38M1088 925l-2-38 16-3 4 38',
            'M1305 850c20-15 90-5 103 20l-5 45c-30 5-80-10-98-28zM1310 890l5 80c10 15 40 15 58 8l22-65M1305 850c10 20 80 30 103 20',
            'M1210 790l22 18-8 32-22-2-10-30zM1190 735l10 18 24 4 10-20M1160 780l10-15 10 30-12 20M1252 765l18 10 4 40-20-10zM1200 850l-15 10M1230 845l10 15M1235 725c20-10 30 0 42-15l-10 30 55-10c-20 25-40 30-42 50 10 5 20 0 38 0-15 30-25 45-45 50',
            'M1200 560c30-30 80-15 82 30 0 60-40 95-80 90-40-5-50-80-2-120zM1215 575c20-15 45 0 42 25-5 35-45 25-55 5-5-15 5-25 13-30zM1220 545c-10-30 15-35 18-5M1280 620c20-10 20 20 0 20M1180 665c-20-5-45 20-35 35 25 0 40-15 45-25M1215 680c0 30 10 40 18-5M1170 610c-20 0-20-30 5-25M1215 575l-12-20M1255 580l10-20M1258 615l22 8M1240 630l10 30M1210 625l-18 35M1195 605l-25 5',
            'M1280 490c60-25 120 10 134 110-60 25-130-20-134-110zM1310 485l-14 60M1328 485l-20 80M1395 525l-25 80M1408 550l-22 55M1322 510l50 45M1332 508l-5 18M1344 520l-5 18M1356 530l-5 18M1366 540l-5 16',
            'M1125 322c-20 5-25 120 10 140 30 15 80 10 90-60 0-40-70-90-100-80zM1130 330c30-8 90 30 92 60-20 5-85-20-92-60zM1232 375c25 10 40 30 10 65-15 10-25 10-30 5M1225 405c20-5 30 0 15 25-10 5-22 0-15-25zM1127 400q5 25 25 30',
            'M970 450c0-30 30-35 45-25 25-10 60-5 62 30 5 30-10 30 0 55-5 20-20 25-40 15l-40-20c-20-15-30-30-27-55zM1045 460c-25-20-45 20-25 35 15 5 20-5 25-10M1045 450v20',
            'M1000 638c0-40 20-80 50-80 40 0 50 50 48 70-30 5-70 5-98 10z',
            'M932 270c-50-30-55 30-30 70 10 15 25 15 32 10 25 10 40-10 44-50 0-40-30-45-46-30zM930 268c-5-20-20-30-30-25 0 15 10 25 30 25zM932 262c0-20 5-22 18-20-2 15-8 20-18 20z',
            'M1010 170c10-35 60-45 90-45 30 5 40 40 42 80l16 28-115 30c-30-5-35-50-33-93zM1048 190c5-25 35-25 35 0-5 20-35 35-20 38 10-5 5-20-5-18M1065 218c20 15 35-5 42-15',
            'M870 70c30 10 40 60 10 90-15 0-25-10-20-20M815 100c20-30 50-30 50 5 0 20-5 35-20 50-15 20-25-5-32-5-10-5-5-25-5-50M812 60c5-30 25-15 28 5 5-25 30-20 25 0-10 20-20 20-28 15-10 10-25 0-25-20M810 155v20c10 10 30 5 35-5M800 170c-25 15-28 50-33 65l35 20 20-50M770 240l-15 20-45-50M845 165c20 20 15 60 15 100l15 105c-20 15-40 20-60 10-15 0-10 0-15-5-30-5-60-30-80-65l-30-5c-8-40 0-70 5-75M690 220c0-15 30-15 35 5M800 270h50M705 305c-10 60-20 120-12 185M705 305h40l25-5 35-45M725 320c20 30 10 60 30 90l10 80c-5 30-15 35-25 30l-50-35c0-5 20-5 30-10l-15-70M710 420l45-15M708 440l50-15M750 365l-5 40M815 380c-5 50 5 60 15 90M865 375c-5 40 5 50 15 85M830 475l50-15M835 495l50-15M840 515l50-15M690 570l-40-60c-20-20-15-70 5-70 30-5 30 20 60 10M690 570h278M690 570c-15-30-25-60-55-80M770 490c40 0 40 25 75 45M830 570c0-30 10-35 70-30M740 570l-60-35-30-55M845 535c-15-10 5-15 45-18l15 20v30M935 565l-12-60M915 565l-15-65 20 60 5-95 15 90 10-60-5 60M960 565l-8-30',
            'M340 415v-50c-10-5-15-15-15-25M400 275c-5-20-40-20-60-15-40 10-35 80-15 95 5-20-5-25 10-45 20 5 50-10 60-35l10 30c0 40 0 50-35 70M340 365c10 20 40 20 45-5M343 415c15 15 35 10 42-20M315 412c-40 10-35 60-35 100 5 50 10 80 40 110l5 8 215-60-15-75c-10-15-50-10-75 10M340 415l10 55 60-20M390 395l20 55 15 75-45 15M410 390c50-5 60 25 65 65M410 390l50 200M440 465l30-10M340 555c10-60 30-60 30-80l30 5c15 20 10 40-20 60l-10 70-25 20M323 412l15 140M280 512l50-10M450 550l85-20M455 510l60-20M470 480c0-20 20-20 25 10M345 325c0-15 25-15 25 5s-25 15-25-5zM380 320c0-15 22-15 22 5s-22 10-22-5zM365 348q6 6 12-2',
            'M476 335c-25-20-25-45-12-45 8 0 12 5 12 12 0-10 8-14 14-12 15 5 8 30-14 45zM445 300c5-30 20-45 40-42M505 285c8 20 5 40-5 55M445 335c8 15 20 20 35 18',
            'M145 293l45-40 32 82-20 12zM200 350l15 10 8-10-4-14M165 405l130-38c10-2 14 12 5 18L175 420c-12 2-20-10-10-15zM245 378l5-60 15-5 20 8 8 45M250 345l40-10',
            'M225 90c5-12 15-8 16 5l8 90-15 5zM210 165l75-35c15-2 18 15 8 20l-80 30',
            'M8 290c20-30 35-60 28-100 10-25 60-30 85-10M130 195c10 60-20 140-72 205C30 370 0 340 0 290M108 180q24 0 22 20',
            'M20 0l25 70M45 70l75-30M80 0l40 100 50-22M120 30l36 34M120 60l30-30M175 78l-6-50M62 80l28-12M65 98l32-14',
            'M215 0c5 40 35 72 70 72 30 0 60-20 62-72M240 0l12 52 16-20 4-32M300 0c-10 20 10 40 4 70M325 0l-4 40M412 75l4-25 14-6-8 26zM478 0c0 40 15 70 35 70l80-10c15-5 20-30 20-60',
            'M545 165c-20-40 0-75 40-80 15 0 25 10 30 20M590 180q-35 0-45-15M620 222c-60-10-50-80 5-95 50 10 50 90-5 95zM575 100l10-12 10 14 8-16M615 142l8-16 10 16 12-14M622 145v12M636 144l4 12',
            'M548 236q0-14 10-6l8 20 18-6 6 54-22 12-20-46zM680 20l30 10-10 32-24-10zM700 60l16 8-6 22-14-10z',
            'M35 525c-20-40 10-90 30-90 10-15 20-10 30-10 20-10 30 0 40 5 15 0 20 10 25 15 20 5 20 20 18 30M35 525l135 30c10-10 8-50 5-80-15-50-70-60-100-25-20 25-25 45-30 70M40 520c-5-20 10-60 30-75M55 480l8-4M58 500l8-4',
            'M498 400h38v44h-34zM535 378h20v24h-20z',
            'M50 640c0-15 15-15 25-25h25c10 10 15 15 30 20l20 95c0 10-5 15-10 18l-80 20M45 660l90-25M50 640l8 60M50 600l20-8 8 20-25 8zM100 620c0-20 35-60 35-5l-2 25M35 700c10 30 40 35 60 25l-30 40c-20 0-40-20-30-65z',
            'M205 605c15-15 40 5 55 20l60 45c10 10 0 15-10 18l-22 5c10 50-5 60-25 55-30-20-70-100-58-143zM208 640l5 130 25-40M270 745l10 55 15-20 15 12-10-40 22 8-30-30M210 620q10-10 25-5',
            'M355 740l70-50-15 108-25-35zM425 690l-42 70',
            'M500 628l75 12c5 0 8 5 6 10l-10 72c-2 5-6 6-10 5l-45-10-14 12-2-18-12-4 8-72c0-4 2-7 4-7zM522 630c0-40 40-40 40 5M508 662l52 10M506 682l40 8',
            'M868 740q6-10 14 0M928 725h8M925 755l15 8M840 785l-5 22 8-20M818 765h8',
            'M870 1100c-20-10-10-70 20-100 30-20 80-15 95 40 5 30-5 40-15 45-10-30-30-30-45-20-25 5-30 20-35 35l8 30c-15 5-30-15-28-30zM915 990l10 75M890 1005l20 70M945 1000l-15 60M965 1010l-20 55M865 1045l30 30M985 1050l-25 15',
            'M960 1170l110-30M960 1170l25 205c5 5 10 5 15 4l240-55c8-3 12-8 10-15l-22-190M985 1325l-50 10 65 115c3 5 8 4 12 3l210-50c5-3 5-12 5-20l-220 50-15-5M1042 1150l16 110M986 1238l52-12M992 1288l50-12M1125 1355l30 42M1100 1190c-20 0-30-15-25-30-15-15-5-40-2-50-15-30 5-50 20-55 5-30 35-35 50-30 20-20 45-5 50 15 25 5 30 30 22 50 10 15 5 40-5 50 0 25-15 40-30 35M1115 1100c5-60 60-60 65 0 0 40-10 65-35 68s-35-30-30-68zM1112 1115c-15 0-10 25 3 25M1182 1115c12 0 8 25-2 25M1120 1170l-10 15c-30 30-60 65-62 120 5 40 20 55 40 50l85-20c25-10 30-40 25-60-10-10-25-5-45 5l-75 15M1110 1185l40 15 30-32c30 20 45 35 50 140M1105 1275c0-30-5-40 5-55M1165 1250l55-10M1190 1205c20 10 30 20 35 40M1145 1270l8 65M1165 1275v-22M1128 1108q6-8 10 0M1150 1106q6-8 10 0M1140 1130q8 15 18-2M972 1178l12 12M984 1178l-12 12',
            'M1420 1170c25 5 20 60 18 80-10 60-30 110-60 115-50 0-75-40-75-80 5-60 40-50 60-90 15-25 35-30 57-25zM1435 1185c-5 120-20 150-58 170-40 0-60-40-55-70M1372 1225l12 4M1380 1215l8 12M1340 1275q6-8 10 0M1358 1270q6-8 10 0M1345 1300q10 10 20-5',
            'M108 1345l5 45 28-8-5-42M98 1175c20 25 25 50 35 70l-8 2c10 15 15 30 25 38l-8 2c10 20 25 30 33 42-15 5-22-8-30-10-5 10-20 15-25 0-10 15-25 20-30 5-10 25-25 15-28 2l4-60h-6l10-45h-5c5-20 15-40 33-51zM88 1255q5 30 14 5M108 1300q10 25 14 5 10 20 16 0',
            'M60 1070c-2-40 0-50 15-45 5 10 0 20 2 30l-2 40c15 20 5 60-25 58-30 0-30-40-20-55 5-15 20-15 20-8zM45 1145l-35 32',
            'M165 1190c-10-60 30-90 70-88 30 15 90 50 105 90 10 20-5 30-25 28-25-10-60-55-90-50-15 10-12 30-10 60l28 20c-5 20-15 35-30 40l-20-15-8-60M165 1190c0 10 10 40 30 45M200 1110l15 60M175 1140l35 40M235 1103l-5 65M262 1130l-22 30M263 1040c-15 60 50 70 75 130M315 1222c60 50 90-10 130-30 20-8 25-25 28-45',
            'M370 1125c-10-40 5-65 30-65 30-5 50 20 55 50M370 1128l80-18c10 5 10 20 8 28l-80 18c-12 2-15-20-8-28zM400 1030v35M383 1042l32 18M383 1060l32-20M392 1033l16 34M408 1033l-16 34',
            'M450 1195l14-6 6 40-14 4zM468 1192c0-15 25-25 45-25 20 0 35 15 40 35-15 10-20-10-30 0l-8 15 20 90-22 8-15-105-20 5zM498 1248l22-6',
            'M318 1290c5-25 25-35 50-25l150 105c25 15 45 40 35 70-10 20-30 30-55 15L350 1355c-25-15-40-40-32-65zM372 1335c0-20 15-30 25-30 10 5 5 20 0 30-5 15-10 20-18 20-8-3-8-10-7-20zM475 1405c0-20 15-30 25-30 10 5 5 20 0 30-5 15-10 20-18 20-8-3-8-10-7-20zM378 1322l22 10M480 1395l22 10',
            'M225 1330c15-25 70 10 73 60-10 20-30 10-40-5l-25-30c-8-8-12-18-8-25zM235 1360c5 25-20 35-30 60-2 15 15 30 30 20 15-15 10-40 30-50M235 1345l50 50',
            'M572 1330l85-85c8-2 12 2 14 8l-86 90c-8 0-13-8-13-13zM585 1345c10 30 30 50 60 48 30-10 45-30 46-60l-14-75M610 1325l25 65M650 1295l32 70M650 1295l-20 95M690 1365l38 50-60 52-28-75M650 1430l65-60',
            'M890 1158c5 80-40 200-128 238-5-100 55-210 128-238zM828 1235l-30 25v70l24-26 10 10 22-60-16-2z',
            'M55 850l25-5M50 880l42-40 60 45M50 880l6-30M65 905l80-15M90 920l25-5 4 45-26 5zM70 935h15M120 930l20-5M72 968l70-15M68 995l90-15M68 800c-8 15 10 20 5 40',
            'M0 790l12-14 18 4 12 26-20 16H0M1405 790l14-18 10 12 18-6 6 22-30 22z',
            'M0 1170c40 30 30 150 0 180',
            'M945 95l35 40 8 10h-22v10l-40-10 10-30-2-10zM970 155l20 28M765 75c-15-25-35-50-33-75M795 0c0 30-15 50-30 75M880 0c5 40 20 42 35 40l40-10',
            'M1235 165c5 30 30 50 50 60l-25 40 55 25c15-40 50-40 70-75M1240 165l175 55c5-30-10-45-5-55M1280 170c0 20 5 40 20 50M1320 175l-5 45M1110 70c5-50 30-70 60-80M1110 70c-5 40 10 55 40 50 30-10 60-5 55-25l-30-10 40-60-30 20-20-15-30 50',
            'M1258 345c-2-8 6-12 10-5l12 18 40-45c8-2 10 6 6 12l-42 55c-5 3-8 0-10-4zM1300 380l45-62c8-2 10 4 6 10l-42 58c-6 2-10-2-9-6z',
            'M1070 312l-14 6M1070 720l12 14M1057 972l24 30-18 30-28-25z',
            'M1015 1065h28l-8 45h-12l2-24c-14 0-18-16-10-21z',
        ],
    },
];

const shapes = {
    star: 'M0-12Q2-3 13 0Q2 3 0 13Q-3 3-13 0Q-3-3 0-12z',
    cloud: 'M-7 10C-19 8-18-5-8-6-6-15 9-14 9-6 20-8 22 9 10 9 6 9 5 8 3 7 1 10-3 11-7 10z',
    bolt: 'M-11-12L1-16 2-4 12-3 4 16 0 6-6 4z',
    dart: 'M-13-6L13-11 7 10-1 2z',
    cross: 'M-12-8c2-5 6-5 9-2l3 4 4-4c5-3 10 2 8 6l-5 4 5 5c2 5-3 9-7 7l-5-5-5 5c-5 2-9-3-7-7l5-5z',
    bag: 'M-9-5l16-3 4 14-12 9-10-9zM-4-6c-2-12 9-12 8-1',
    flake: 'M0-2c-4-12 5-12 2 0 8-8 12 0 2 3 10 5 4 11-3 3 0 11-9 8-4-2-12 3-11-7 3-4z',
    gem: 'M-6-5l10-4 5 11-10 7z',
};

const stamps: Array<[keyof typeof shapes, number, number]> = [
    ['star', 32, 338], ['star', 219, 642], ['star', 694, 227], ['star', 710, 311], ['star', 535, 452], ['star', 418, 693], ['star', 286, 744], ['star', 354, 975], ['star', 169, 752],
    ['star', 206, 1070], ['star', 359, 1161], ['star', 281, 1477], ['star', 475, 1448], ['star', 534, 1558], ['star', 772, 1343], ['star', 10, 1620],
    ['cloud', 154, 390], ['cloud', 374, 410], ['cloud', 587, 233], ['cloud', 27, 559], ['cloud', 688, 967], ['cloud', 549, 1295], ['cloud', 763, 1303],
    ['bolt', 129, 602], ['bolt', 131, 1224], ['bolt', 498, 1295], ['bolt', 92, 1349], ['bolt', 776, 1480], ['bolt', 747, 987],
    ['dart', 691, 483], ['dart', 797, 213], ['dart', 222, 685], ['dart', 647, 1245], ['dart', 720, 1408], ['dart', 528, 1183], ['dart', 678, 685],
    ['cross', 671, 614], ['cross', 396, 979], ['cross', 241, 1088], ['cross', 444, 203], ['cross', 696, 1441],
    ['bag', 285, 1085], ['bag', 467, 968], ['bag', 502, 475], ['bag', 729, 1511],
    ['flake', 433, 1060], ['flake', 651, 1430], ['gem', 398, 1074], ['gem', 722, 1471], ['gem', 433, 967],
];

function Wallpaper() {
    return (
        <svg className="pointer-events-none absolute left-0 top-0 h-full w-full" fill="none" stroke="#22262a" strokeWidth="2" strokeLinecap="round" strokeLinejoin="round" aria-hidden="true">
            <defs>
                <g id="doodles">
                    {sheets.map((s, i) => (
                        <g key={i} transform={`translate(${s.x} ${s.y}) scale(${s.sx} ${s.sy})`}>
                            {s.paths.map((d, j) => <path key={j} d={d} vectorEffect="non-scaling-stroke" />)}
                            {s.rings.map(([cx, cy, r], j) => <ellipse key={j} cx={cx} cy={cy} rx={r / s.sx} ry={r / s.sy} vectorEffect="non-scaling-stroke" />)}
                            {s.texts?.map(t => (
                                <text key={t.value} transform={`translate(${t.x} ${t.y}) rotate(${t.rotate})`} fontSize={t.size} fontWeight="700" fontFamily="Roboto, 'Noto Sans CJK SC', sans-serif" vectorEffect="non-scaling-stroke">{t.value}</text>
                            ))}
                        </g>
                    ))}
                    {stamps.map(([name, x, y], i) => <path key={i} d={shapes[name]} transform={`translate(${x} ${y})`} />)}
                </g>
            </defs>
            {[-1, 0, 1, 2, 3].map(col => [0, 1].map(row => (
                <use key={`${col}-${row}`} href="#doodles" x={col * TILE_W} y={row * TILE_H} />
            )))}
        </svg>
    );
}

function Pray() {
    return (
        <svg className="ml-1.5 inline-block h-12 w-[37px] align-[-11px]" viewBox="0 0 37 48" role="img" aria-label="Terima kasih">
            <defs>
                <linearGradient id="skin" x1="0" x2="1" y1="0" y2="0"><stop offset="0" stopColor="#dcae98" /><stop offset=".5" stopColor="#fbe6da" /><stop offset="1" stopColor="#f0cdbb" /></linearGradient>
                <linearGradient id="cuff" x1="0" x2="0" y1="0" y2="1"><stop offset="0" stopColor="#74dfd0" /><stop offset="1" stopColor="#1f8a80" /></linearGradient>
            </defs>
            <path d="M12.500 1.500C14 0 17 .5 18 2v36c-2 3-7 7-10 8L4.500 34C9 30 10 26 10.500 20z" fill="url(#skin)" />
            <path d="M24 1.500C22.500 0 20 .5 19 2v36c2 3 7 7 10 8l3.500-12C28 30 27 26 26.500 20z" fill="url(#skin)" />
            <path d="M18.500 1.500V38M12.500 7.500q3-1.500 5.500 0M19 7.500q3-1.500 5 0" fill="none" stroke="#c08f77" strokeWidth="1" />
            <path d="M1 35l6.500-3c1 5 1.500 9 3.500 13l-7 2.500C2.500 44 1.500 40 1 35z" fill="url(#cuff)" />
            <path d="M36 35l-6.500-3c-1 5-1.500 9-3.500 13l7 2.500C34.500 44 35.500 40 36 35z" fill="url(#cuff)" />
        </svg>
    );
}

function Ticks() {
    return (
        <svg className="h-[22px] w-9" viewBox="0 0 36 22" fill="none" stroke="#9db5a7" strokeWidth="3" strokeLinecap="round" strokeLinejoin="round" aria-label="Terkirim">
            <path d="M2 14l6.500 6L23 2M16 18.500l3 2L34 2" />
        </svg>
    );
}

function Stamp({ time, sent = true, bright = false }: { time: string; sent?: boolean; bright?: boolean }) {
    return (
        <span className="flex items-center gap-2 self-end">
            <time className={`text-[26px] leading-6 ${bright ? 'text-[#9bb0a4]' : 'text-[#87948f]'}`}>{time}</time>
            {sent && <Ticks />}
        </span>
    );
}

function Tail({ side }: { side: 'left' | 'right' }) {
    return (
        <svg className={`absolute top-0 h-6 w-8 ${side === 'right' ? '-right-4' : '-left-4 -scale-x-100'}`} viewBox="0 0 32 24" fill={side === 'right' ? '#264a39' : '#22272b'} aria-hidden="true">
            <path d="M0 0h28.500c3 0 4 3 2 5.500L16 24H0z" />
        </svg>
    );
}

function Day({ children }: { children: ReactNode }) {
    return <div className="my-[23px] flex h-[60px] shrink-0 items-center self-center rounded-2xl bg-[#12181c] px-5 text-[30px] text-[#8d9497]">{children}</div>;
}

function Forward() {
    return (
        <button aria-label="Teruskan" className="flex size-[72px] shrink-0 items-center justify-center rounded-full bg-[#10171b]">
            <svg className="h-8 w-11" viewBox="0 0 44 32" fill="none" stroke="#fff" strokeWidth="5" strokeLinecap="round" strokeLinejoin="round">
                <path d="M4 28v-4q0-11 12-11h14M21 3l9 10-9 10M32 3l9 10-9 10" />
            </svg>
        </button>
    );
}

function StatusBar() {
    return (
        <div className="flex h-[72px] items-center justify-end gap-2.5 pr-8">
            <svg className="h-8 w-[150px]" viewBox="150 60 450 96" fill="none" stroke="#fff" strokeWidth="8" aria-hidden="true">
                <path d="M176 72c-24 20-24 50 0 72 6-5 12-11 16-18M200 144c24-20 24-50 0-72-6 5-12 11-16 18M176 72q9 8 12 17c-17 10-18 27-6 38M200 144q-9-8-12-17c17-10 18-27 6-38" />
                <path d="M258 86l38 36-14 20V72l16 18-40 38M252 98l8 9-8 9" />
                <rect x="317" y="84" width="43" height="63" rx="9" strokeWidth="5" /><path d="M324 70h27" strokeWidth="6" /><rect x="327" y="98" width="21" height="38" fill="#fff" stroke="none" />
                <path d="M396 138c8-8 8-18 8-36 0-14 8-22 18-24 0-14 18-14 18 0 14 4 18 14 18 30 0 14 2 22 8 30z" fill="#fff" stroke="none" /><path d="M421 140h20c-2 10-18 10-20 0z" fill="#fff" stroke="none" /><path d="M402 72l66 68" stroke="#0b1014" strokeWidth="8" /><path d="M396 78l66 66" />
                <path d="M498 94c28-30 72-30 100 0M513 108c20-20 50-20 70 0M528 122c12-12 28-12 40 0" strokeWidth="8" /><circle cx="548" cy="137" r="10" fill="#fff" stroke="none" />
                <path d="M580 128v20l-12-10zM586 128v20l13-10z" fill="#fff" stroke="none" />
            </svg>
            <div className="flex items-center gap-0.5">
                <div className="flex h-[30px] w-[53px] items-center justify-center rounded-[9px] border-2 border-white bg-[#434649] text-[25px] text-white">100</div>
                <div className="h-2 w-[3px] rounded-sm bg-white" />
            </div>
        </div>
    );
}

const bubble = 'relative flex shrink-0 flex-col rounded-3xl bg-[#264a39] text-[37px] leading-[42px] text-[#f6faf8]';

export default function App() {
    const [message, setMessage] = useState('');

    return (
        <div className="relative flex h-screen min-h-[600px] flex-col overflow-hidden bg-[#0b1014] font-[Roboto,sans-serif]">
            <Wallpaper />
            <header className="relative border-b-2 border-[#191e22] bg-[#0b1014]">
                <StatusBar />
                <div className="flex h-[124px] items-center pl-[37px] pr-[45px]">
                    <div className="flex size-[79px] items-center justify-center rounded-full bg-[#112440] text-4xl font-medium text-[#6ba3f0]">P</div>
                    <h1 className="ml-[46px] flex-1 truncate text-[39px] text-[#f7f8fa]">Pak Surya RAS BTN KC Depok</h1>
                    <div className="flex items-center text-[#f7f8fa]">
                        <button aria-label="Panggilan video">
                            <svg className="h-9 w-[46px]" viewBox="0 0 46 36">
                                <rect x="2.500" y="2.500" width="32" height="31" rx="2" fill="none" stroke="currentColor" strokeWidth="5" />
                                <path d="M35 15l9-8q2-1 2 1v20q0 2-2 1l-9-8z" fill="currentColor" />
                            </svg>
                        </button>
                        <button aria-label="Panggilan suara" className="ml-[58px]">
                            <svg className="size-[54px]" viewBox="0 0 24 24" fill="currentColor" stroke="currentColor" strokeWidth="0.3">
                                <path d="M6.540 5c.06.89.21 1.760.45 2.590l-1.200 1.200c-.41-1.200-.67-2.470-.76-3.790h1.510m9.860 12.020c.85.24 1.720.39 2.600.45v1.490c-1.320-.09-2.590-.35-3.800-.75l1.200-1.190M7.500 3H4c-.55 0-1 .45-1 1 0 9.390 7.610 17 17 17 .55 0 1-.45 1-1v-3.490c0-.55-.45-1-1-1-1.240 0-2.450-.2-3.570-.57a.84.84 0 0 0-.31-.05c-.26 0-.51.1-.71.29l-2.200 2.200a15.150 15.150 0 0 1-6.590-6.590l2.200-2.200c.28-.28.36-.67.25-1.020A11.360 11.360 0 0 1 8.500 4c0-.55-.45-1-1-1z" />
                            </svg>
                        </button>
                        <button aria-label="Menu" className="ml-16">
                            <svg className="h-[38px] w-[10px]" viewBox="0 0 10 38" fill="currentColor"><circle cx="5" cy="6" r="4.700" /><circle cx="5" cy="19.500" r="4.700" /><circle cx="5" cy="33" r="4.700" /></svg>
                        </button>
                    </div>
                </div>
            </header>

            <main className="relative flex min-h-0 flex-1 flex-col justify-end overflow-hidden pb-[14px] pl-5 pr-[38px]">
                <div className="flex shrink-0 items-center gap-[18px] self-end">
                    <Forward />
                    <div className={`${bubble} min-h-[794px] w-[590px] justify-end px-6 pb-3`}>
                        <p>Gardapati mohon support dan<br />kerjasamanya ya Mas.</p>
                        <p className="mt-[42px]">Dan izin Mas, mohon dibantu<br />untuk riwayat pengelolaan</p>
                        <p className="leading-[60px]">accountnya<Pray /></p>
                        <div className="mt-[42px] flex justify-between">
                            <p className="mb-1 leading-[60px]">Terimakasih<Pray /></p>
                            <Stamp time="08.11" bright />
                        </div>
                    </div>
                </div>

                <Day>Kemarin</Day>

                <div className={`${bubble} h-[75px] min-w-[568px] flex-row justify-between self-end py-[14px] pl-[23px] pr-5`}>
                    <Tail side="right" />
                    <p className="pr-4">selamat siang pak surya</p>
                    <Stamp time="14.36" />
                </div>
                <div className={`${bubble} mt-1.5 w-[94%] self-end px-[23px] pb-3 pt-[14px]`}>
                    <p>izn pak mohon dibantu untuk nomor telp terupdate debitur an Hendri Setiawan</p>
                    <div className="-mr-[3px] flex justify-between">
                        <p className="mb-1 leading-[60px]">(<a href="#rekening" className="font-bold text-[#6db5e3] underline decoration-2 underline-offset-[7px]">4801020249341</a>) pak<Pray /></p>
                        <Stamp time="14.37" />
                    </div>
                </div>

                <div className={`${bubble} mt-[23px] h-[74px] w-[264px] flex-row justify-between self-start bg-[#22272b] py-[14px] pl-6 pr-5`}>
                    <Tail side="left" />
                    <p>Baik bu</p>
                    <Stamp time="14.39" sent={false} />
                </div>

                <Day>Hari ini</Day>

                <div className={`${bubble} h-[75px] min-w-[575px] flex-row justify-between self-end py-[14px] pl-[23px] pr-5`}>
                    <Tail side="right" />
                    <p className="pr-4">Selamat siang Pak Surya</p>
                    <Stamp time="13.40" />
                </div>
                <div className="mt-1.5 flex shrink-0 items-center gap-[18px] self-end">
                    <Forward />
                    <div className={`${bubble} w-[590px] pb-[14px]`}>
                        <div className="mx-[10px] mt-[10px] flex h-[168px] items-start rounded-2xl bg-[#223f33] pl-5">
                            <svg className="mt-14 h-[55px] w-[46px] shrink-0" viewBox="0 0 46 55" aria-hidden="true">
                                <path d="M7 0h22l17 17v31q0 7-7 7H7q-7 0-7-7V7q0-7 7-7z" fill="#488f59" />
                                <path d="M29 0l17 17H33q-4 0-4-4z" fill="#8dbb9a" />
                                <text x="23" y="45" textAnchor="middle" fontSize="27" fontWeight="700" fill="#fff">X</text>
                            </svg>
                            <div className="ml-[19px] pt-[21px]">
                                <p className="text-[34px] leading-10">JAKARTA II_DEPOK_LAPOR<br />AN_PROGRESS BTN -JULI ...</p>
                                <p className="mt-[10px] flex gap-[19px] text-[27px] text-[#87948f]"><span>2 lembar</span><span>•</span><span>32 kB</span><span>•</span><span>XLSX</span></p>
                            </div>
                        </div>
                        <p className="mt-4 px-6">izin saya kirimkan Laporan<br />Progress sentuhan debitur Juli<br />2025 dan Prognosa Agustus<br />2025 Depok. Penanganan<br />sentuhan debitur akan terus<br />kami maksimalkan. Terimakasih</p>
                        <div className="mt-[22px] flex justify-end px-6"><Stamp time="13.40" bright /></div>
                    </div>
                </div>
            </main>
            <div className="absolute bottom-[152px] right-0 h-[261px] w-[9px] bg-[#45494c]" />

            <form className="relative flex items-start gap-6 pb-[34px] pl-1.5 pr-[9px]" onSubmit={e => { e.preventDefault(); setMessage(''); }}>
                <div className="flex h-[105px] flex-1 items-center rounded-full bg-[#22272b] pl-[25px] pr-6 text-[#8d9497]">
                    <button type="button" aria-label="Stiker">
                        <svg className="size-[46px]" viewBox="93 140 138 138" fill="none" stroke="currentColor" strokeWidth="13">
                            <path d="M224 205v-10c0-30-15-47-45-47h-32c-30 0-47 17-47 47v32c0 28 17 44 47 44h22c12 0 20-5 27-12l20-21c6-7 8-14 8-23zM224 216h-24c-20 0-32 10-32 28v26" />
                            <g fill="currentColor" stroke="none"><circle cx="138" cy="188" r="11" /><circle cx="185" cy="188" r="11" /><path d="M131 219h62c-12 4-20 10-25 23-18 0-32-8-37-23z" /></g>
                        </svg>
                    </button>
                    <div className="ml-[26px] h-[58px] w-[5px] bg-white" />
                    <input aria-label="Pesan" placeholder="Pesan" value={message} onChange={e => setMessage(e.target.value)} className="-ml-1 min-w-0 flex-1 bg-transparent text-[39px] text-white outline-none placeholder:text-[#8d9497]" />
                    <button type="button" aria-label="Lampirkan">
                        <svg className="h-[46px] w-[30px]" viewBox="143 138 90 138" fill="none" stroke="currentColor" strokeWidth="12" strokeLinecap="round">
                            <path d="M224 170v62c0 21-16 37-37 37s-37-16-37-37v-62c0-14 11-25 25-25s25 11 25 25v58c0 8-5 13-12 13s-13-5-13-13v-58" />
                        </svg>
                    </button>
                    <button type="button" aria-label="Kamera" className="ml-[66px]">
                        <svg className="h-[42px] w-[46px]" viewBox="432 147 138 126" fill="none" stroke="currentColor" strokeWidth="12" strokeLinejoin="round">
                            <path d="M438 169h28l14-14h42l14 14h28v96H438z" /><circle cx="501" cy="216" r="25" />
                        </svg>
                    </button>
                </div>
                <button type="button" aria-label="Rekam suara" className="mt-[3px] flex size-[106px] items-center justify-center rounded-full bg-[#fafafa] text-[#0b1014]">
                    <svg className="h-11 w-8" viewBox="825 148 96 132" fill="none" stroke="currentColor" strokeWidth="11" strokeLinecap="round">
                        <rect x="853" y="151" width="40" height="83" rx="20" fill="currentColor" stroke="none" />
                        <path d="M832 217c3 25 20 36 41 36s38-11 41-36M873 253v21" />
                    </svg>
                </button>
            </form>
        </div>
    );
}
